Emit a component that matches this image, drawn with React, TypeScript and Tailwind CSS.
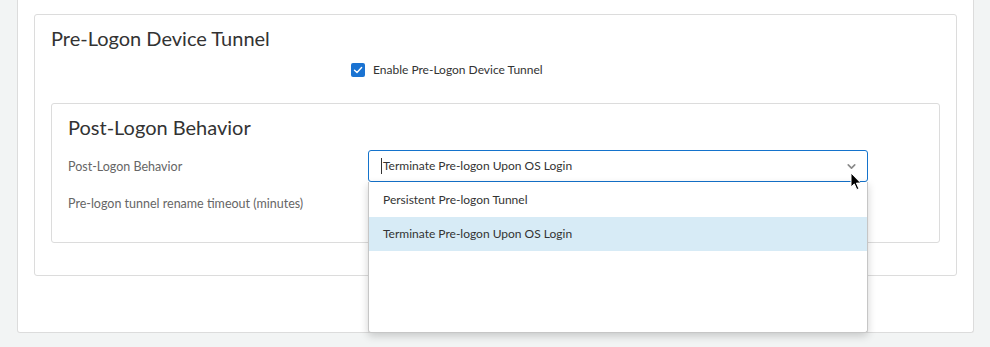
import { ChevronDown } from "lucide-react";

const options = ["Persistent Pre-logon Tunnel", "Terminate Pre-logon Upon OS Login"];

/**
 * Pre-logon tunnel settings, with the behavior select open.
 */
export default function App() {
  const selected = options[1];

  return (
    <div className="w-[990px] h-[347px] bg-[#f2f4f4] overflow-hidden font-['Lato','Noto_Sans',sans-serif] text-[#333]">
      {/* Outer panel */}
      <div className="ml-[17px] w-[957px] h-[333px] bg-white border border-t-0 border-[#dcdcdc] rounded-b-[3px] pt-[14px] px-[16px]">
        {/* Pre-Logon Device Tunnel card */}
        <section className="h-[262px] border border-[#dcdcdc] rounded-[3px] pt-[11px] px-[16px]">
          <h2 className="text-[20px] leading-[24px] text-[#333]">Pre-Logon Device Tunnel</h2>

          <div className="grid grid-cols-[300px_1fr] mt-[13px] h-[14px]">
            <div />
            <label className="flex items-center gap-[8px] text-[12px] leading-[14px] text-[#333]">
              <span className="w-[14px] h-[14px] rounded-[2px] bg-[#1a73d2] flex items-center justify-center">
                <svg width="10" height="10" viewBox="0 0 10 10" fill="none">
                  <path d="M1.5 5.2 L4 7.5 L8.6 2.6" stroke="white" strokeWidth="1.4" strokeLinecap="round" strokeLinejoin="round" />
                </svg>
              </span>
              Enable Pre-Logon Device Tunnel
            </label>
          </div>

          {/* Post-Logon Behavior card */}
          <section className="mt-[26px] h-[140px] border border-[#dcdcdc] rounded-[3px] pt-[11px] px-[16px]">
            <h3 className="text-[20px] leading-[24px] text-[#333]">Post-Logon Behavior</h3>

            <div className="grid grid-cols-[300px_500px] items-center mt-[11px] h-[32px]">
              <span className="text-[12.5px] leading-[14px] text-[#666] mt-[2px]">Post-Logon Behavior</span>
              <div className="relative z-10">
                <div className="h-[32px] border border-[#1473cc] rounded-[3px] flex items-center pl-[12px] pr-[9px] bg-white">
                  <span className="w-px h-[16px] bg-[#333] mr-px" />
                  <span className="flex-1 text-[12px] text-[#333]">{selected}</span>
                  <ChevronDown size={13} strokeWidth={3} className="text-[#8a8a8a] mt-[1px]" />
                </div>

                {/* Open menu */}
                <ul className="absolute left-0 top-full w-[500px] h-[151px] bg-white border border-t-0 border-[#c6c6c6] rounded-b-[3px] shadow-[0_3px_8px_rgba(0,0,0,0.18)] pt-px">
                  {options.map((o) => (
                    <li
                      key={o}
                      className={`h-[34px] flex items-center px-[14px] text-[12px] text-[#333] ${o === selected ? "bg-[#d7ebf6]" : ""}`}
                    >
                      {o}
                    </li>
                  ))}
                </ul>

                {/* Mouse pointer */}
                <svg className="absolute left-[482px] top-[22px]" width="12" height="19" viewBox="0 0 12 19">
                  <path d="M1 1 L1 15 L4.3 11.9 L6.8 17.6 L8.9 16.7 L6.4 11.1 L10.8 11.1 Z" fill="black" stroke="white" strokeWidth="1" strokeLinejoin="round" />
                </svg>
              </div>
            </div>

            <div className="grid grid-cols-[300px_1fr] items-center mt-[6px] h-[32px]">
              <span className="text-[12.5px] leading-[14px] text-[#666]">Pre-logon tunnel rename timeout (minutes)</span>
              <div />
            </div>
          </section>
        </section>
      </div>
    </div>
  );
}
